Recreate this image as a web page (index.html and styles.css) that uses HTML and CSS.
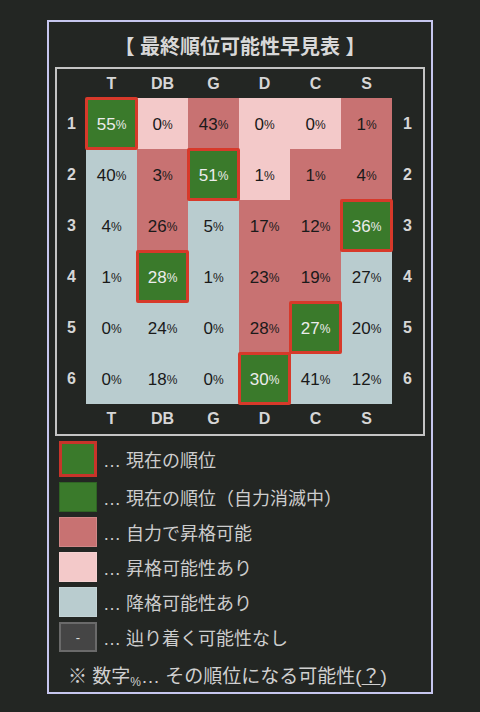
FILE: index.html
```html
<!DOCTYPE html>
<html lang="ja">
  <head>
    <meta charset="UTF-8" />
    <meta name="viewport" content="width=device-width, initial-scale=1.0" />
    <title>最終順位可能性早見表</title>
    <link rel="stylesheet" href="styles.css">
  </head>
  <body>
    <div class="panel">
      <h1 class="title">【 最終順位可能性早見表 】</h1>

      <div class="board">
        <div class="grid" id="grid"></div>
      </div>

      <ul class="legend">
        <li><span class="swatch sw-current"></span>… 現在の順位</li>
        <li><span class="swatch sw-green"></span>… 現在の順位（自力消滅中）</li>
        <li><span class="swatch sw-up"></span>… 自力で昇格可能</li>
        <li><span class="swatch sw-maybe"></span>… 昇格可能性あり</li>
        <li><span class="swatch sw-down"></span>… 降格可能性あり</li>
        <li><span class="swatch sw-none">-</span>… 辿り着く可能性なし</li>
      </ul>

      <p class="note">※ 数字<span class="pct">%</span>… その順位になる可能性(<u>？</u>)</p>
    </div>

    <script>
      // チーム名
      const teams = ["T", "DB", "G", "D", "C", "S"];

      // 各順位の確率と色 (c=現在, u=自力, m=可能性, d=降格)
      const rows = [
        [[55, "c"], [0, "m"], [43, "u"], [0, "m"], [0, "m"], [1, "u"]],
        [[40, "d"], [3, "u"], [51, "c"], [1, "m"], [1, "u"], [4, "u"]],
        [[4, "d"], [26, "u"], [5, "d"], [17, "u"], [12, "u"], [36, "c"]],
        [[1, "d"], [28, "c"], [1, "d"], [23, "u"], [19, "u"], [27, "d"]],
        [[0, "d"], [24, "d"], [0, "d"], [28, "u"], [27, "c"], [20, "d"]],
        [[0, "d"], [18, "d"], [0, "d"], [30, "c"], [41, "d"], [12, "d"]],
      ];

      const grid = document.getElementById("grid");

      function addCell(cls, text) {
        const div = document.createElement("div");
        div.className = cls;
        div.innerHTML = text;
        grid.appendChild(div);
      }

      function addHeader() {
        addCell("head", "");
        teams.forEach((t) => addCell("head", t));
        addCell("head", "");
      }

      addHeader();
      rows.forEach((row, i) => {
        addCell("rank", i + 1);
        row.forEach(([val, type]) => {
          addCell("cell cell-" + type, val + '<span class="pct">%</span>');
        });
        addCell("rank", i + 1);
      });
      addHeader();
    </script>
  </body>
</html>
```

FILE: styles.css
```css
body {
  margin: 0;
  background-color: #232623;
  font-family: "Liberation Sans", "Noto Sans CJK JP", sans-serif;
  color: #d0d0d0;
}
.panel {
  width: 382px;
  margin: 20px auto 0;
  border: 2px solid #c6c6ee;
  padding-bottom: 3px;
}
.title {
  margin: 0;
  padding-top: 5px;
  line-height: 40px;
  font-size: 20px;
  font-weight: bold;
  text-align: center;
  color: #d8d8d8;
}
.board {
  margin: 0 6px;
  border: 2px solid #c4c4c4;
}
.grid {
  display: grid;
  grid-template-columns: 29px repeat(6, 51px) 1fr;
  grid-template-rows: 29px repeat(6, 51px) 30px;
}
.head,
.rank {
  display: flex;
  align-items: center;
  justify-content: center;
  font-size: 16px;
  font-weight: bold;
  color: #d6d6d6;
}
.cell {
  display: flex;
  align-items: center;
  justify-content: center;
  padding-top: 2px;
  font-size: 17px;
  color: #1a1a1a;
}
.pct {
  font-size: 12px;
  vertical-align: -3px;
}
.cell-u {
  background-color: #c87272;
}
.cell-m {
  background-color: #f3c9c9;
}
.cell-d {
  background-color: #b9cccf;
}
.cell-c {
  position: relative;
  z-index: 1;
  margin: -1px;
  background-color: #3a7a2b;
  border: 3px solid #d7392a;
  border-radius: 2px;
  color: #ececec;
}
.legend {
  list-style: none;
  margin: 5px 0 0;
  padding: 0 0 0 10px;
  display: flex;
  flex-direction: column;
  gap: 5px;
}
.legend li {
  display: flex;
  align-items: center;
  gap: 6px;
  height: 30px;
  font-size: 18px;
  color: #cdcdcd;
}
.legend li:first-child {
  height: 36px;
}
.swatch {
  box-sizing: border-box;
  width: 38px;
  height: 30px;
  border: 1px solid rgba(255, 255, 255, 0.15);
}
.sw-current {
  height: 36px;
  background-color: #3a7a2b;
  border: 3px solid #c8342a;
}
.sw-green {
  background-color: #3a7a2b;
  border-color: #2f6424;
}
.sw-up {
  background-color: #c87272;
}
.sw-maybe {
  background-color: #f3c9c9;
}
.sw-down {
  background-color: #b9cccf;
}
.sw-none {
  display: flex;
  align-items: center;
  justify-content: center;
  background-color: #454545;
  border: 2px solid #6a6a6a;
  font-size: 13px;
  color: #e0e0e0;
}
.note {
  margin: 9px 0 0 19px;
  font-size: 19px;
  color: #d0d0d0;
}
```
